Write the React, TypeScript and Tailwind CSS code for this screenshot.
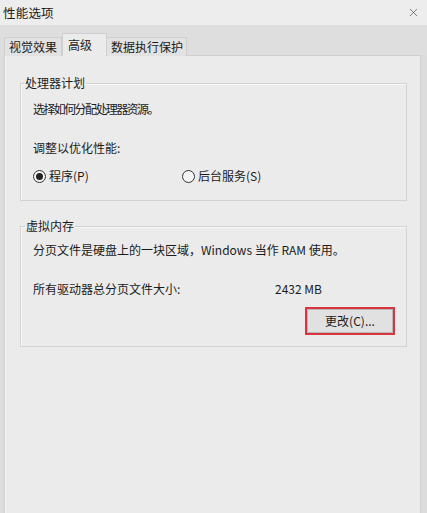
import { X } from "lucide-react"

const font = { fontFamily: '"Noto Sans CJK SC", "Microsoft YaHei", sans-serif' }

function Radio({ checked }: { checked: boolean }) {
  return (
    <span className="flex h-[13px] w-[13px] items-center justify-center rounded-full border border-[#333] bg-[#f4f4f4]">
      {checked && <span className="h-[7px] w-[7px] rounded-full bg-[#222]" />}
    </span>
  )
}

export default function App() {
  return (
    <div
      className="h-[513px] w-[427px] overflow-hidden bg-[#dcdcdc] text-[12px] leading-[16px] text-[#1b1b1b]"
      style={font}
    >
      {/* Title bar */}
      <div className="flex h-[25px] items-center justify-between bg-[#ededed] pl-[3px] pr-[7px]">
        <span className="text-[12.5px] tracking-[0.2px]">性能选项</span>
        <X className="h-[13px] w-[13px] text-[#333]" strokeWidth={1.1} />
      </div>

      {/* Tabs */}
      <div className="flex h-[30px] items-end bg-[#dedede] pl-[4px]">
        <div className="mb-[-1px] flex h-[19px] w-[58px] items-center border border-b-0 border-[#cfcfcf] bg-[#e2e2e2] pl-[4px]">
          视觉效果
        </div>
        <div className="relative z-10 mb-[-1px] flex h-[23px] w-[45px] items-center border border-b-0 border-[#cfcfcf] bg-[#ebebeb] pl-[5px]">
          高级
        </div>
        <div className="mb-[-1px] flex h-[19px] w-[80px] items-center border border-b-0 border-l-0 border-[#cfcfcf] bg-[#e2e2e2] pl-[4px]">
          数据执行保护
        </div>
      </div>

      {/* Panel */}
      <div className="ml-[4px] h-[470px] w-[417px] border border-[#cfcfcf] bg-[#ebebeb] pl-[15px] pr-[13px] pt-[19px] shadow-[inset_1px_0_0_#f6f6f6]">
        <fieldset className="border border-[#d2d2d2] px-[12px] pb-[16px] shadow-[inset_1px_1px_0_#f8f8f8]">
          <legend className="-ml-[9px] px-[1px]">处理器计划</legend>
          <div className="mt-[10px] tracking-[-1.6px]">选择如何分配处理器资源。</div>
          <div className="mt-[23px]">调整以优化性能:</div>
          <div className="mt-[12px] flex items-center">
            <div className="flex w-[149px] items-center gap-[3px]">
              <Radio checked />
              <span>程序(P)</span>
            </div>
            <div className="flex items-center gap-[3px]">
              <Radio checked={false} />
              <span>后台服务(S)</span>
            </div>
          </div>
        </fieldset>

        <fieldset className="mt-[17px] border border-[#d2d2d2] pb-[11px] pl-[12px] pr-[11px] shadow-[inset_1px_1px_0_#f8f8f8]">
          <legend className="-ml-[8px] px-[1px]">虚拟内存</legend>
          <div className="mt-[8px]">分页文件是硬盘上的一块区域，Windows 当作 RAM 使用。</div>
          <div className="mt-[23px] flex">
            <span className="w-[242px]">所有驱动器总分页文件大小:</span>
            <span>2432 MB</span>
          </div>
          <div className="mt-[10px] flex justify-end">
            <button className="flex h-[28px] w-[90px] items-center justify-center border-2 border-[#d8353f] bg-[#e1e1e1] shadow-[inset_0_0_0_1px_#b8b8b8]">
              更改(C)...
            </button>
          </div>
        </fieldset>
      </div>
    </div>
  )
}
